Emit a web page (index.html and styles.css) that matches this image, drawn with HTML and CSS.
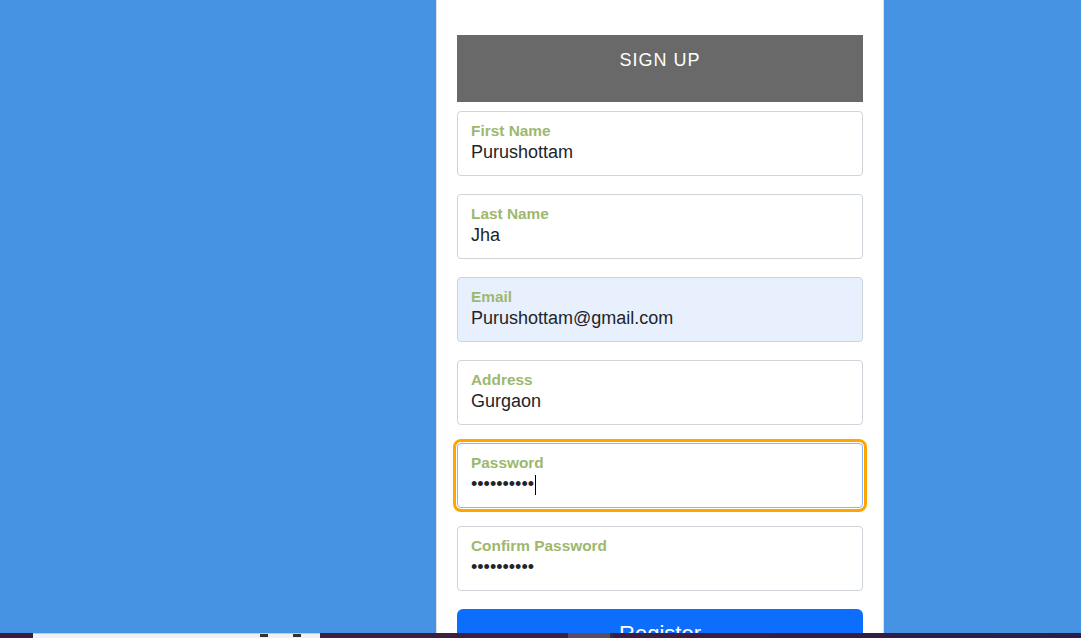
FILE: index.html
```html
<!DOCTYPE html>
<html lang="en">
<head>
<meta charset="utf-8">
<title>Sign Up</title>
<link rel="stylesheet" href="styles.css">
</head>
<body>
<div class="page">
  <div class="card">
    <div class="title">SIGN UP</div>
    <form class="form">
      <div class="field"><span class="label">First Name</span><span class="value">Purushottam</span></div>
      <div class="field"><span class="label">Last Name</span><span class="value">Jha</span></div>
      <div class="field autofill"><span class="label">Email</span><span class="value">Purushottam@gmail.com</span></div>
      <div class="field"><span class="label">Address</span><span class="value">Gurgaon</span></div>
      <div class="field focused"><span class="label">Password</span><span class="value dots">••••••••••<span class="caret"></span></span></div>
      <div class="field"><span class="label">Confirm Password</span><span class="value dots">••••••••••</span></div>
      <button type="button" class="register">Register</button>
    </form>
  </div>
</div>
<div class="taskbar">
  <div class="tb-dark tb-start"></div>
  <div class="tb-window"><span class="tb-mark"></span><span class="tb-mark"></span></div>
  <div class="tb-dark tb-mid"></div>
  <div class="tb-active"></div>
  <div class="tb-sep"></div>
  <div class="tb-rest"></div>
</div>
</body>
</html>
```

FILE: styles.css
```css
html, body {
  margin: 0;
  padding: 0;
}
body {
  background: #4693e3;
  font-family: "Liberation Sans", Arial, sans-serif;
  height: 638px;
  overflow: hidden;
}
.page {
  display: flex;
  padding-left: 436px;
}
.card {
  width: 448px;
  box-sizing: border-box;
  background: #ffffff;
  border-left: 1px solid #dde1e5;
  border-right: 1px solid #dde1e5;
  padding: 35px 20px 0;
  height: 638px;
}
.title {
  height: 67px;
  box-sizing: border-box;
  padding-top: 15px;
  background: #696969;
  color: #ffffff;
  text-align: center;
  font-size: 18px;
  letter-spacing: 1px;
  line-height: 21px;
}
.form {
  margin: 9px 0 0;
  display: flex;
  flex-direction: column;
  gap: 18px;
}
.field {
  height: 65px;
  box-sizing: border-box;
  border: 1px solid #ced4da;
  border-radius: 4px;
  padding: 10px 13px 0;
  background: #ffffff;
  display: flex;
  flex-direction: column;
}
.field.autofill {
  background: #e8f0fe;
}
.field.focused {
  border-color: #86b7fe;
  outline: 3px solid #ffa500;
  outline-offset: 1px;
}
.label {
  font-size: 15.4px;
  line-height: 17px;
  font-weight: bold;
  color: #9db86d;
}
.value {
  margin-top: 3px;
  font-size: 18px;
  line-height: 21px;
  color: #212529;
}
.value.dots {
  color: #212529;
  display: flex;
  align-items: center;
}
.caret {
  display: inline-block;
  width: 1px;
  height: 20px;
  background: #000000;
  margin-left: 1px;
}
.register {
  margin-top: 0;
  height: 50px;
  border: none;
  border-radius: 6px;
  background: #0d6efd;
  color: #ffffff;
  font-family: "Liberation Sans", Arial, sans-serif;
  font-size: 22px;
  line-height: 25px;
  padding: 12px 0 0;
  text-align: center;
  display: flex;
  justify-content: center;
  align-items: flex-start;
}
.taskbar {
  position: fixed;
  left: 0;
  right: 0;
  bottom: 0;
  height: 5px;
  display: flex;
}
.tb-dark {
  background: #3a1d3d;
}
.tb-start {
  width: 33px;
}
.tb-window {
  width: 287px;
  background: #f0f0f0;
  border-top: 1px solid #c8c8c8;
  box-sizing: border-box;
  display: flex;
  gap: 25px;
  padding-left: 227px;
}
.tb-mark {
  width: 8px;
  height: 3px;
  background: #333333;
}
.tb-mid {
  width: 248px;
  background: #3d1f3f;
}
.tb-active {
  width: 42px;
  background: #5d4c5f;
}
.tb-sep {
  width: 3px;
  background: #3a2a3c;
}
.tb-rest {
  flex: 1;
  background: linear-gradient(90deg, #3c1d3f, #2b1f47);
}
```
